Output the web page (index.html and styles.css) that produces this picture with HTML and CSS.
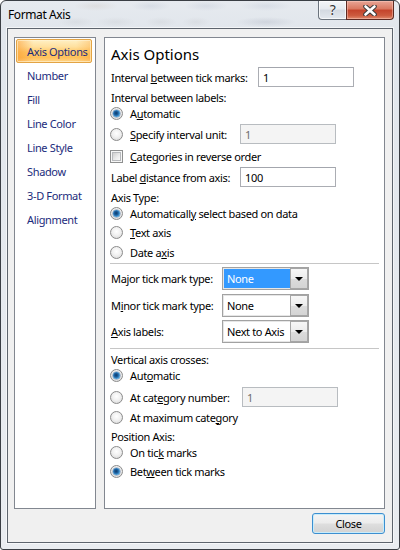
FILE: index.html
```html
<!DOCTYPE html>
<html>
<head>
<meta charset="utf-8">
<title>Format Axis</title>
<link rel="stylesheet" href="styles.css">
</head>
<body>
<div class="window">
  <div class="titlebar">
    <span class="title">Format Axis</span>
    <div class="caption">
      <div class="cap help">?</div>
      <div class="cap close">
        <svg width="14" height="11" viewBox="0 0 14 11">
          <path d="M2.5 1.5 L11.5 9.5 M11.5 1.5 L2.5 9.5" stroke="#3a3a3a" stroke-width="4.6" stroke-linecap="round" fill="none"/>
          <path d="M2.5 1.5 L11.5 9.5 M11.5 1.5 L2.5 9.5" stroke="#ffffff" stroke-width="2.6" stroke-linecap="round" fill="none"/>
        </svg>
      </div>
    </div>
  </div>
  <div class="client">
    <div class="main">
      <ul class="nav">
        <li class="item active">Axis Options</li>
        <li class="item">Number</li>
        <li class="item">Fill</li>
        <li class="item">Line Color</li>
        <li class="item">Line Style</li>
        <li class="item">Shadow</li>
        <li class="item">3-D Format</li>
        <li class="item">Alignment</li>
      </ul>
      <div class="panel">
        <div class="heading">Axis Options</div>

        <div class="row field mt2"><span class="label l-tick">Interval <u>b</u>etween tick marks:</span><span class="input">1</span></div>
        <div class="row mt2"><span class="label">Interval between labels:</span></div>
        <div class="row"><span class="radio on"></span><span>A<u>u</u>tomatic</span></div>
        <div class="row field mt3"><span class="radio"></span><span class="l-unit"><u>S</u>pecify interval unit:</span><span class="input disabled">1</span></div>
        <div class="row mt4"><span class="check"></span><span><u>C</u>ategories in reverse order</span></div>
        <div class="row field mt3"><span class="label l-dist">Label <u>d</u>istance from axis:</span><span class="input">100</span></div>
        <div class="row mt2"><span class="label">Axis Type:</span></div>
        <div class="row"><span class="radio on"></span><span>Automaticall<u>y</u> select based on data</span></div>
        <div class="row mt3"><span class="radio"></span><span><u>T</u>ext axis</span></div>
        <div class="row mt4"><span class="radio"></span><span>Date a<u>x</u>is</span></div>

        <div class="sep mt3"></div>

        <div class="row combo-row mt3"><span class="label l-combo">Ma<u>j</u>or tick mark type:</span><div class="combo active"><span class="val">None</span><span class="drop"><span class="arrow"></span></span></div></div>
        <div class="row combo-row mt4"><span class="label l-combo">M<u>i</u>nor tick mark type:</span><div class="combo"><span class="val">None</span><span class="drop"><span class="arrow"></span></span></div></div>
        <div class="row combo-row mt3"><span class="label l-combo"><u>A</u>xis labels:</span><div class="combo"><span class="val">Next to Axis</span><span class="drop"><span class="arrow"></span></span></div></div>

        <div class="sep mt5"></div>

        <div class="row mt2"><span class="label">Vertical axis crosses:</span></div>
        <div class="row"><span class="radio on"></span><span>Aut<u>o</u>matic</span></div>
        <div class="row field mt4"><span class="radio"></span><span class="l-cat">At cat<u>e</u>gory number:</span><span class="input disabled">1</span></div>
        <div class="row mt2"><span class="radio"></span><span>At maximum cate<u>g</u>ory</span></div>
        <div class="row mt3"><span class="label">Position Axis:</span></div>
        <div class="row"><span class="radio"></span><span>On tic<u>k</u> marks</span></div>
        <div class="row mt3"><span class="radio on"></span><span>Bet<u>w</u>een tick marks</span></div>
      </div>
    </div>
    <div class="footer">
      <div class="btn">Close</div>
    </div>
  </div>
</div>
</body>
</html>
```

FILE: styles.css
```css
html, body {
  margin: 0;
  padding: 0;
}

body {
  width: 400px;
  height: 550px;
  overflow: hidden;
  font-family: "Noto Sans", "Open Sans", sans-serif;
  font-size: 11px;
  letter-spacing: -0.35px;
  color: #000;
  background: #ffffff;
}

.window {
  box-sizing: border-box;
  width: 400px;
  height: 550px;
  border: 1px solid #3a3e44;
  border-radius: 6px 6px 3px 3px;
  padding: 0 6px 6px;
  display: flex;
  flex-direction: column;
  background:
    radial-gradient(ellipse 22px 5px at 95px 5px, rgba(150, 120, 90, 0.10), transparent),
    radial-gradient(ellipse 20px 5px at 150px 5px, rgba(90, 110, 150, 0.10), transparent),
    radial-gradient(ellipse 22px 5px at 205px 5px, rgba(90, 110, 150, 0.10), transparent),
    radial-gradient(ellipse 26px 5px at 265px 5px, rgba(90, 110, 150, 0.10), transparent),
    radial-gradient(ellipse 18px 5px at 75px 21px, rgba(110, 110, 110, 0.08), transparent),
    radial-gradient(ellipse 20px 5px at 115px 21px, rgba(110, 110, 110, 0.08), transparent),
    radial-gradient(ellipse 16px 5px at 160px 21px, rgba(110, 110, 110, 0.08), transparent),
    radial-gradient(ellipse 14px 5px at 195px 21px, rgba(110, 110, 110, 0.08), transparent),
    radial-gradient(ellipse 30px 5px at 265px 21px, rgba(70, 80, 110, 0.12), transparent),
    linear-gradient(to bottom, #e6eaef 0, #e1e6ec 28px, #e9ecf0 100%);
}

/* ---------- title bar ---------- */
.titlebar {
  height: 27px;
  margin: 0 -6px;
  padding: 0 5px 0 7px;
  display: flex;
  align-items: center;
}

.title {
  flex: 1;
  font-size: 12px;
  letter-spacing: -0.4px;
  color: #000;
}

.caption {
  align-self: flex-start;
  display: flex;
}

.cap {
  box-sizing: border-box;
  height: 19px;
  display: flex;
  align-items: center;
  justify-content: center;
}

.help {
  width: 28px;
  border: 1px solid #6b737d;
  border-top: none;
  border-right: none;
  border-radius: 0 0 0 4px;
  background: linear-gradient(to bottom, #f4f6f8 0, #e6eaef 45%, #d3d9e1 50%, #e3e8ee 100%);
  box-shadow: inset 0 0 0 1px rgba(255, 255, 255, 0.7);
  font-size: 14px;
  color: #333;
  text-shadow: 0 0 2px #fff, 0 0 1px #fff;
  padding-bottom: 1px;
}

.close {
  width: 48px;
  border: 1px solid #5c2a22;
  border-top: none;
  border-radius: 0 0 4px 0;
  background: linear-gradient(to bottom, #e8a596 0, #d9775f 45%, #c4432b 50%, #cc5a3e 80%, #e08a6c 100%);
  box-shadow: inset 0 0 0 1px rgba(255, 210, 200, 0.45);
}

/* ---------- client area ---------- */
.client {
  flex: 1;
  box-sizing: border-box;
  border: 1px solid #5d646d;
  box-shadow: 0 0 0 1px rgba(255, 255, 255, 0.6);
  background: #f0f0f0;
  padding: 8px 7px 7px 6px;
  display: flex;
  flex-direction: column;
}

.main {
  display: flex;
  gap: 8px;
  height: 472px;
}

.nav {
  box-sizing: border-box;
  width: 82px;
  margin: 0;
  padding: 1px 0 0;
  list-style: none;
  border: 1px solid #828790;
  background: #ffffff;
}

.item {
  box-sizing: border-box;
  width: 76px;
  height: 24px;
  margin-left: 1px;
  padding-left: 10px;
  border: 1px solid transparent;
  display: flex;
  align-items: center;
  color: #1b2c7c;
}

.item.active {
  border-color: #e3a444;
  border-radius: 2px;
  background:
    linear-gradient(to right, rgba(250, 150, 40, 0.55) 0, rgba(255, 190, 90, 0) 22%, rgba(255, 190, 90, 0) 80%, rgba(250, 160, 50, 0.35) 100%),
    linear-gradient(to bottom, #fff0c4 0, #ffe1a0 30%, #ffc968 55%, #ffc25c 80%, #ffd58c 100%);
  box-shadow: inset 0 0 0 1px rgba(255, 245, 215, 0.6);
}

.panel {
  box-sizing: border-box;
  width: 281px;
  border: 1px solid #828790;
  background: #ffffff;
  padding: 0 5px;
}

.heading {
  height: 22px;
  margin-top: 5px;
  padding-left: 1px;
  display: flex;
  align-items: center;
  font-size: 15px;
  letter-spacing: 0;
}

.row {
  height: 16px;
  display: flex;
  align-items: center;
  white-space: nowrap;
}

.row.field {
  height: 20px;
}

.row.combo-row {
  height: 23px;
}

.mt2 { margin-top: 2px; }
.mt3 { margin-top: 3px; }
.mt4 { margin-top: 4px; }
.mt5 { margin-top: 5px; }

.label {
  padding-left: 1px;
}

.l-tick { box-sizing: border-box; width: 148px; }
.l-dist { box-sizing: border-box; width: 130px; }
.l-combo { box-sizing: border-box; width: 112px; }
.l-unit { width: 110px; }
.l-cat { width: 112px; }

u {
  text-decoration: underline;
  text-underline-offset: 1px;
}

/* ---------- controls ---------- */
.radio {
  flex: none;
  position: relative;
  box-sizing: border-box;
  width: 13px;
  height: 13px;
  margin-right: 7px;
  border-radius: 50%;
  border: 1px solid #8b8b8b;
  background: radial-gradient(circle at 50% 40%, #ffffff 0, #f1f1f1 45%, #d2d2d2 100%);
}

.radio.on::after {
  content: "";
  position: absolute;
  left: 2px;
  top: 2px;
  width: 7px;
  height: 7px;
  border-radius: 50%;
  background: radial-gradient(circle at 45% 45%, #0d3a68 0, #1c5f9e 35%, #4fa6e0 70%, #2b74b4 100%);
  box-shadow: 0 0 0 0.5px rgba(30, 70, 120, 0.6);
}

.check {
  flex: none;
  position: relative;
  box-sizing: border-box;
  width: 13px;
  height: 13px;
  margin-right: 7px;
  border: 1px solid #8e8f8f;
  background: #f6f6f6;
}

.check::after {
  content: "";
  position: absolute;
  left: 1px;
  top: 1px;
  width: 9px;
  height: 9px;
  box-sizing: border-box;
  border: 1px solid #b7b9bc;
  background: linear-gradient(135deg, #cfcfcf 0, #ececec 60%, #f8f8f8 100%);
}

.input {
  box-sizing: border-box;
  width: 96px;
  height: 20px;
  padding-left: 4px;
  border: 1px solid #abadb3;
  border-top-color: #a3a6ad;
  background: #ffffff;
  display: flex;
  align-items: center;
}

.input.disabled {
  background: #f4f4f4;
  border-color: #b8bcc0;
  color: #6d6d6d;
}

.combo {
  box-sizing: border-box;
  width: 87px;
  height: 23px;
  border: 1px solid #a2a2a2;
  box-shadow: inset 0 0 0 1px #e6e6e6;
  padding: 1px;
  display: flex;
  background: #ffffff;
}

.combo .val {
  flex: 1;
  padding-left: 3px;
  display: flex;
  align-items: center;
}

.combo.active .val {
  background: #3399ff;
  color: #ffffff;
}

.drop {
  box-sizing: border-box;
  width: 18px;
  border: 1px solid #a6a6a6;
  margin: -1px -1px -1px 0;
  background: linear-gradient(to bottom, #f7f7f7 0, #ececec 50%, #dcdcdc 51%, #d4d4d4 100%);
  display: flex;
  align-items: center;
  justify-content: center;
}

.arrow {
  width: 0;
  height: 0;
  border-left: 4px solid transparent;
  border-right: 4px solid transparent;
  border-top: 4px solid #000;
}

.sep {
  height: 0;
  border-top: 1px solid #c6c6c6;
}

/* ---------- footer ---------- */
.footer {
  margin-top: 4px;
  display: flex;
  justify-content: flex-end;
}

.btn {
  box-sizing: border-box;
  width: 73px;
  height: 21px;
  border: 1px solid #3c8fd0;
  border-radius: 3px;
  background: linear-gradient(to bottom, #f4f4f4 0, #ececec 48%, #dedede 52%, #d2d2d2 100%);
  box-shadow: inset 0 0 0 1px #c8ecfb;
  display: flex;
  align-items: center;
  justify-content: center;
  color: #000;
}
```
